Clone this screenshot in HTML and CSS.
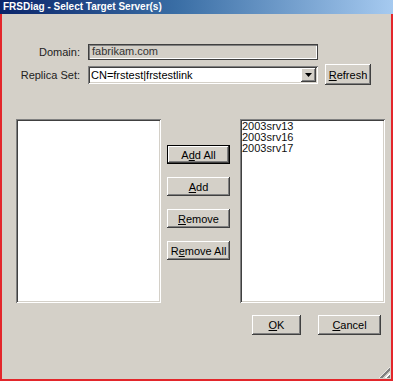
FILE: index.html
```html
<!DOCTYPE html>
<html lang="en">
<head>
  <meta charset="UTF-8">
  <title>FRSDiag - Select Target Server(s)</title>
  <link rel="stylesheet" href="styles.css">
</head>
<body>
  <div class="window">
    <div class="titlebar">FRSDiag - Select Target Server(s)</div>
    <div class="content">
      <!-- domain / replica set -->
      <div class="form">
        <label class="label">Domain:</label>
        <div class="field readonly">fabrikam.com</div>
        <span></span>

        <label class="label">Replica Set:</label>
        <div class="field combo">
          <span class="combo-text">CN=frstest|frstestlink</span>
          <span class="drop">
            <svg width="7" height="4" viewBox="0 0 7 4"><path d="M0 0h7L3.5 4z" fill="#000"/></svg>
          </span>
        </div>
        <button class="btn refresh"><u>R</u>efresh</button>
      </div>

      <!-- server lists -->
      <div class="lists">
        <div class="listbox"></div>
        <div class="actions">
          <button class="btn default">A<u>d</u>d All</button>
          <button class="btn"><u>A</u>dd</button>
          <button class="btn"><u>R</u>emove</button>
          <button class="btn">R<u>e</u>move All</button>
        </div>
        <div class="listbox">
          <div class="item">2003srv13</div>
          <div class="item">2003srv16</div>
          <div class="item">2003srv17</div>
        </div>
      </div>

      <div class="footer">
        <button class="btn ok"><u>O</u>K</button>
        <button class="btn cancel"><u>C</u>ancel</button>
      </div>
      <div class="grip"></div>
    </div>
  </div>
</body>
</html>
```

FILE: styles.css
```css
body {
  margin: 0;
  font-family: 'Liberation Sans', Arial, sans-serif;
  font-size: 11px;
  color: #000;
  background: #fff;
}
.window {
  width: 393px;
  height: 381px;
  box-sizing: border-box;
  border: 2px solid #e3262b;
  border-top: 0;
  background: #d4d0c8;
  display: flex;
  flex-direction: column;
}
.titlebar {
  height: 14px;
  margin: 0 -2px;
  padding-left: 3px;
  background: linear-gradient(to right, #0a246a 0%, #3a6ea5 45%, #a6caf0 100%);
  color: #fff;
  font-family: 'Liberation Sans', Arial, sans-serif;
  font-weight: bold;
  font-size: 10px;
  line-height: 14px;
}
.content {
  position: relative;
  flex: 1;
  padding-top: 30px;
}
.form {
  display: grid;
  grid-template-columns: 78px 230px 47px;
  column-gap: 8px;
  row-gap: 4px;
  align-items: center;
}
.label {
  text-align: right;
  color: #222;
}
.field {
  height: 16px;
  box-sizing: border-box;
  padding: 0 3px;
  line-height: 16px;
  box-shadow: inset 1px 1px #808080, inset -1px -1px #fff;
}
.readonly {
  background: #d4d0c8;
  border: 1px solid #404040;
  line-height: 13px;
  color: #333;
}
.combo {
  height: 18px;
  background: #fff;
  display: flex;
  align-items: center;
  padding: 0 2px 0 3px;
  box-shadow: inset 1px 1px #808080, inset -1px -1px #fff, inset 2px 2px #404040, inset -2px -2px #d4d0c8;
}
.combo-text {
  flex: 1;
  padding-top: 1px;
}
.drop {
  width: 15px;
  height: 14px;
  background: #d4d0c8;
  display: flex;
  align-items: center;
  justify-content: center;
  box-shadow: inset -1px -1px #404040, inset 1px 1px #fff, inset -2px -2px #808080;
}
.btn {
  font-family: inherit;
  font-size: 11px;
  color: #000;
  background: #d4d0c8;
  border: 0;
  padding: 0;
  height: 19px;
  box-shadow: inset -1px -1px #404040, inset 1px 1px #fff, inset -2px -2px #808080, inset 2px 2px #d4d0c8;
}
.refresh {
  width: 46px;
  height: 21px;
  margin-left: -1px;
}
.btn.default {
  border: 1px solid #000;
}
.lists {
  display: flex;
  margin-top: 34px;
  padding-left: 14px;
}
.listbox {
  width: 145px;
  height: 184px;
  box-sizing: border-box;
  background: #fff;
  padding: 2px;
  box-shadow: inset 1px 1px #808080, inset -1px -1px #fff, inset 2px 2px #404040, inset -2px -2px #d4d0c8;
}
.item {
  line-height: 11px;
  color: #111;
}
.actions {
  width: 63px;
  margin: 0 10px 0 6px;
  padding-top: 26px;
  display: flex;
  flex-direction: column;
  gap: 13px;
}
.actions .btn {
  width: 63px;
}
.footer {
  display: flex;
  justify-content: flex-end;
  gap: 17px;
  margin-top: 12px;
  padding-right: 10px;
}
.ok {
  width: 49px;
  height: 20px;
}
.cancel {
  width: 63px;
  height: 20px;
}
.grip {
  position: absolute;
  right: 1px;
  bottom: 1px;
  width: 11px;
  height: 11px;
  background: repeating-linear-gradient(135deg, transparent 0 2px, #fff 2px 3px, #808080 3px 5px);
  clip-path: polygon(100% 0, 100% 100%, 0 100%);
}
```
